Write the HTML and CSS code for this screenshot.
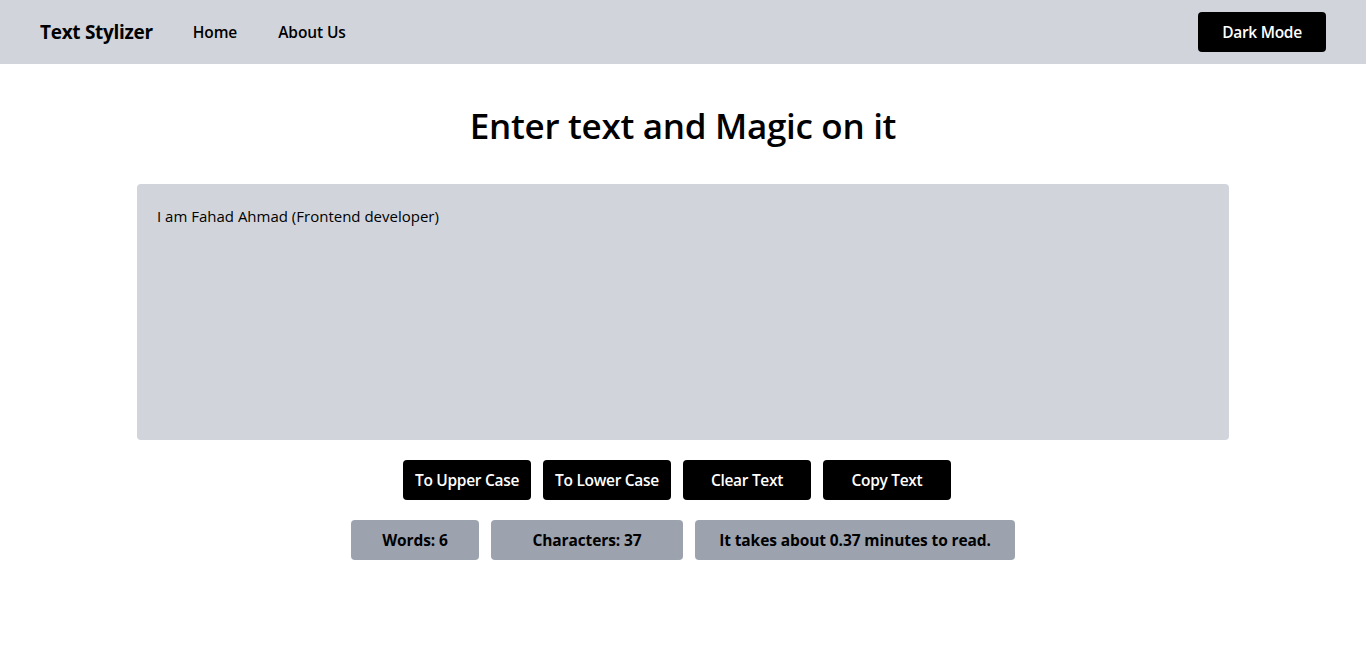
FILE: index.html
```html
<!DOCTYPE html>
<html lang="en">
<head>
<meta charset="utf-8">
<title>Text Stylizer</title>
<link rel="stylesheet" href="styles.css">
</head>
<body>
<nav class="navbar">
  <div class="nav-left">
    <span class="brand">Text Stylizer</span>
    <a class="nav-link" href="#">Home</a>
    <a class="nav-link" href="#">About Us</a>
  </div>
  <button class="btn-dark">Dark Mode</button>
</nav>
<main class="main">
  <h1 class="title">Enter text and Magic on it</h1>
  <textarea class="editor">I am Fahad Ahmad (Frontend developer)</textarea>
  <div class="actions">
    <button class="btn">To Upper Case</button>
    <button class="btn">To Lower Case</button>
    <button class="btn">Clear Text</button>
    <button class="btn">Copy Text</button>
  </div>
  <div class="stats">
    <div class="stat w-sm">Words: 6</div>
    <div class="stat w-md">Characters: 37</div>
    <div class="stat w-lg">It takes about 0.37 minutes to read.</div>
  </div>
</main>
</body>
</html>
```
FILE: styles.css
```css
* { box-sizing: border-box; }
body {
  margin: 0;
  font-family: "Open Sans", "Noto Sans", sans-serif;
  color: #000;
  background: #fff;
}
.navbar {
  height: 64px;
  background: #d1d5db;
  display: flex;
  align-items: center;
  justify-content: space-between;
  padding: 0 40px;
}
.nav-left {
  display: flex;
  align-items: center;
  gap: 40px;
}
.brand {
  font-size: 19px;
  font-weight: 700;
  letter-spacing: -0.3px;
}
.nav-link {
  color: #000;
  text-decoration: none;
  font-size: 15.5px;
  font-weight: 600;
  letter-spacing: -0.1px;
}
.nav-link + .nav-link { margin-left: 1px; }
.btn-dark, .btn {
  width: 128px;
  height: 40px;
  background: #000;
  color: #fff;
  border: none;
  border-radius: 4px;
  font-family: inherit;
  font-size: 15.5px;
  font-weight: 600;
  letter-spacing: -0.3px;
  padding: 0;
}
.main {
  display: flex;
  flex-direction: column;
  align-items: center;
}
.title {
  margin: 39px 0 0;
  height: 81px;
  font-size: 35px;
  font-weight: 600;
  letter-spacing: -0.3px;
  line-height: 46px;
}
.editor {
  width: 1092px;
  height: 256px;
  background: #d1d5db;
  border: none;
  border-radius: 4px;
  padding: 20px;
  font-family: inherit;
  font-size: 15px;
  line-height: 24px;
  color: #000;
  resize: none;
  outline: none;
}
.actions {
  display: flex;
  justify-content: center;
  margin-top: 20px;
}
.actions .btn { margin-right: 12px; }
.stats {
  display: flex;
  justify-content: center;
  gap: 12px;
  margin-top: 20px;
}
.stat {
  height: 40px;
  background: #9ca3af;
  border-radius: 4px;
  display: flex;
  align-items: center;
  justify-content: center;
  font-size: 15.5px;
  font-weight: 700;
  letter-spacing: -0.1px;
}
.w-sm { width: 128px; }
.w-md { width: 192px; }
.w-lg { width: 320px; }
```
